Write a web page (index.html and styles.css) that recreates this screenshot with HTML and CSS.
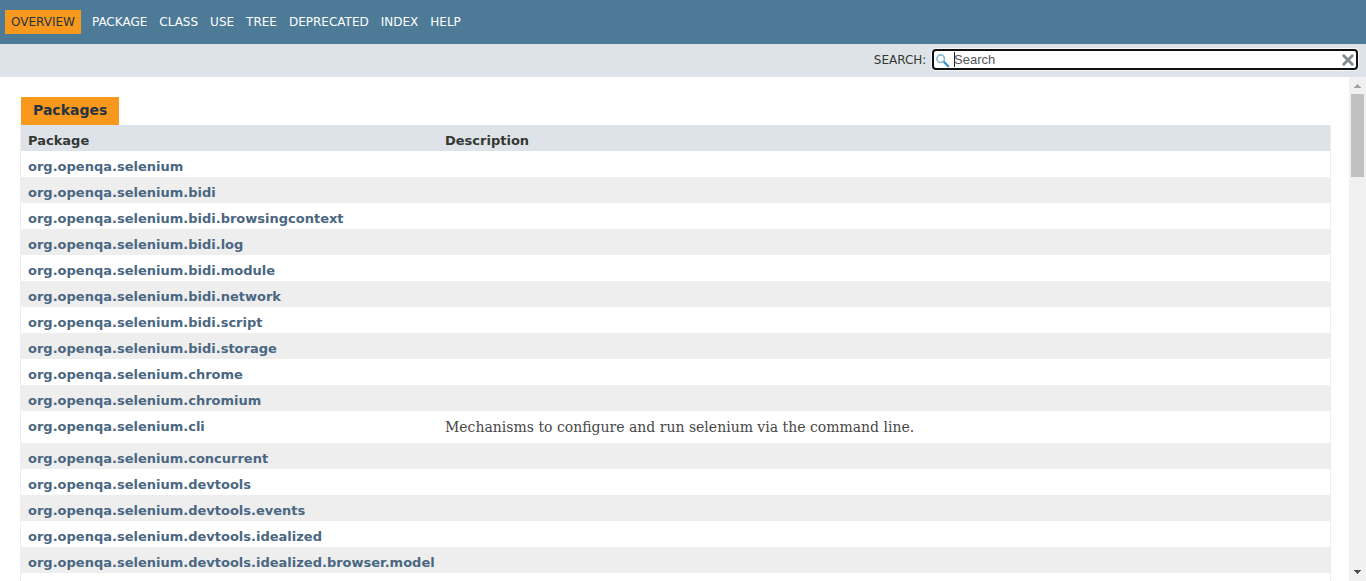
FILE: index.html
```
<!DOCTYPE html>
<html lang="en">
<head>
<meta charset="utf-8">
<title>Overview</title>
<link rel="stylesheet" href="styles.css">
</head>
<body>
<header>
  <nav class="top-nav">
    <span class="nav-active">Overview</span>
    <a>Package</a><a>Class</a><a>Use</a><a>Tree</a><a>Deprecated</a><a>Index</a><a>Help</a>
  </nav>
  <div class="sub-nav">
    <label>SEARCH:</label>
    <div class="search-box">
      <svg class="glass" width="14" height="14" viewBox="0 0 14 14"><circle cx="4.7" cy="4.7" r="3.8" fill="#fff" stroke="#84b9d0" stroke-width="1.6"/><path d="M8.3 8.3L12.2 12.2" stroke="#3592c8" stroke-width="2.3" stroke-linecap="round"/></svg>
      <span class="caret"></span><span class="placeholder">Search</span>
      <svg class="reset" width="12" height="12" viewBox="0 0 12 12"><path d="M1.8 1.8L10.2 10.2M10.2 1.8L1.8 10.2" stroke="#858c90" stroke-width="3" stroke-linecap="round"/></svg>
    </div>
  </div>
</header>
<div class="content">
  <main>
    <div class="caption">Packages</div>
    <div class="table">
      <div class="row head"><div>Package</div><div>Description</div></div>
      <div class="row"><a>org.openqa.selenium</a></div>
      <div class="row odd"><a>org.openqa.selenium.bidi</a></div>
      <div class="row"><a>org.openqa.selenium.bidi.browsingcontext</a></div>
      <div class="row odd"><a>org.openqa.selenium.bidi.log</a></div>
      <div class="row"><a>org.openqa.selenium.bidi.module</a></div>
      <div class="row odd"><a>org.openqa.selenium.bidi.network</a></div>
      <div class="row"><a>org.openqa.selenium.bidi.script</a></div>
      <div class="row odd"><a>org.openqa.selenium.bidi.storage</a></div>
      <div class="row"><a>org.openqa.selenium.chrome</a></div>
      <div class="row odd"><a>org.openqa.selenium.chromium</a></div>
      <div class="row described"><a>org.openqa.selenium.cli</a><div class="block">Mechanisms to configure and run selenium via the command line.</div></div>
      <div class="row odd"><a>org.openqa.selenium.concurrent</a></div>
      <div class="row"><a>org.openqa.selenium.devtools</a></div>
      <div class="row odd"><a>org.openqa.selenium.devtools.events</a></div>
      <div class="row"><a>org.openqa.selenium.devtools.idealized</a></div>
      <div class="row odd"><a>org.openqa.selenium.devtools.idealized.browser.model</a></div>
      <div class="row"></div>
    </div>
  </main>
  <div class="scrollbar">
    <svg width="17" height="17" viewBox="0 0 17 17" shape-rendering="crispEdges"><path d="M8 7h1v1h1v1h1v1h1v1H5v-1h1V9h1V8h1z" fill="#a3a3a3"/></svg>
    <div class="thumb"></div>
    <svg class="down" width="17" height="17" viewBox="0 0 17 17" shape-rendering="crispEdges"><path d="M5 6h7v1h-1v1h-1v1H9v1H8V9H7V8H6V7H5z" fill="#505050"/></svg>
  </div>
</div>
</body>
</html>
```
FILE: styles.css
```
* { box-sizing: border-box; }
body {
  margin: 0;
  height: 581px;
  overflow: hidden;
  display: flex;
  flex-direction: column;
  background: #fff;
  color: #353833;
  font-family: "DejaVu Sans", Arial, sans-serif;
  font-size: 14px;
}
header { flex: none; }
.top-nav {
  display: flex;
  align-items: flex-start;
  height: 44px;
  padding: 10px 0 0 5px;
  background: #4d7a97;
  color: #fff;
  font-size: 12px;
  line-height: 14px;
  text-transform: uppercase;
}
.top-nav a { padding: 5px 6px; }
.nav-active {
  height: 24px;
  padding: 5px 6px;
  margin-right: 5px;
  background: #f8981d;
  color: #253441;
}
.sub-nav {
  display: flex;
  justify-content: flex-end;
  height: 33px;
  padding: 5px 8px 0 0;
  background: #dee3e9;
  font-size: 12px;
}
.sub-nav label { padding-top: 4px; line-height: 14px; margin-right: 5.6px; }
.search-box {
  display: flex;
  width: 426px;
  height: 21px;
  padding: 2px 2px 0 2px;
  border: 2px solid #101010;
  border-radius: 4px;
  background: #fff;
  box-shadow: 0 0 0 1px #f4f6f8;
  color: #555;
  font: 13px/16px "Liberation Sans", Arial, sans-serif;
}
.glass { margin: 1px 4px 0 0; }
.caret { width: 1px; height: 15px; margin-top: -1px; background: #222; }
.placeholder { margin: -1px 0 0 -1px; }
.reset { margin: 1px 0 0 auto; }
.content { display: flex; flex: 1; min-height: 0; }
main { flex: 1; padding: 20px 18px 0 20px; overflow: hidden; }
.caption {
  width: 98px;
  height: 28px;
  margin-left: 1px;
  padding: 5px 0 0 12px;
  background: #f8981d;
  color: #253441;
  font-weight: bold;
  line-height: 16px;
}
.table { border: solid #eee; border-width: 0 1px; }
.row {
  display: grid;
  grid-template-columns: 417px 1fr;
  height: 26px;
  padding-left: 7px;
  padding-top: 8px;
  font-size: 13px;
  line-height: 15px;
}
.row a { color: #4a6782; font-weight: bold; white-space: nowrap; }
.odd { background: #eeeeef; }
.head { background: #dee3e9; font-weight: bold; }
.described { height: 32px; }
.block { color: #474747; font: 14px/17px "DejaVu Serif", Georgia, serif; }
.scrollbar {
  display: flex;
  flex-direction: column;
  width: 17px;
  background: #f1f1f1;
}
.thumb { height: 83px; margin: 0 2px; background: #c1c1c1; }
.down { margin-top: auto; }
```
